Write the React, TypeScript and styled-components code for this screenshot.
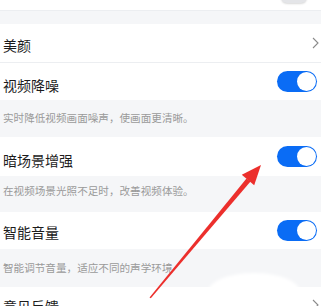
import React from "react";
import styled, { createGlobalStyle } from "styled-components";

const Global = createGlobalStyle`
  html, body { margin: 0; padding: 0; background: #f5f6f8; }
  body { font-family: "Noto Sans CJK SC", "Noto Sans", sans-serif; }
`;

const Page = styled.div`
  position: relative;
  width: 321px;
  height: 306px;
  overflow: hidden;
  background: #f5f6f8;
  display: flex;
  flex-direction: column;
  & > * { flex-shrink: 0; }
`;

const TopStrip = styled.div`
  height: 11px;
  background: #fff;
  border-bottom: 1px solid #eceef1;
  box-sizing: border-box;
  display: flex;
  justify-content: flex-end;
  padding-right: 14px;
`;

const OffToggleTail = styled.div`
  width: 26px;
  height: 12px;
  margin-top: -9px;
  border-radius: 6px;
  background: #e4e5e8;
  box-shadow: 0 1px 2px rgba(0,0,0,0.15);
`;

const Gap = styled.div`
  height: 13px;
`;

const Row = styled.div<{ $h: number; $divider?: boolean; $top?: number }>`
  height: ${(p) => p.$h}px;
  background: #fff;
  display: flex;
  align-items: ${(p) => (p.$top !== undefined ? "flex-start" : "center")};
  padding: ${(p) => p.$top ?? 0}px 4px 0 3px;
  justify-content: space-between;
  box-sizing: border-box;
  border-bottom: ${(p) => (p.$divider ? "1px solid #eceef1" : "none")};
`;

const Title = styled.span<{ $dy?: number }>`
  font-size: 14px;
  color: #1c1c1c;
  line-height: 1;
  transform: translateY(${(p) => p.$dy ?? 1}px);
`;

const Desc = styled.div<{ $h: number; $dy?: number }>`
  height: ${(p) => p.$h}px;
  display: flex;
  align-items: center;
  padding-left: 3px;
  font-size: 10.6px;
  color: #9a9a9a;
  line-height: 1;
  & > span { transform: translateY(${(p) => p.$dy ?? 0}px); }
`;

const Toggle = styled.div`
  width: 40px;
  height: 21px;
  border-radius: 11px;
  background: #0a6cf5;
  display: flex;
  align-items: center;
  justify-content: flex-end;
  padding-right: 1px;
  box-sizing: border-box;
`;

const Knob = styled.div`
  width: 19px;
  height: 19px;
  border-radius: 50%;
  background: #fff;
`;

const Chevron = () => (
  <svg width="7" height="12" viewBox="0 0 7 12" style={{ marginRight: -2 }}>
    <path d="M1 1 L6 6 L1 11" fill="none" stroke="#8a8a8a" strokeWidth="1.1" />
  </svg>
);

const Overlay = styled.svg`
  position: absolute;
  left: 0;
  top: 0;
  pointer-events: none;
`;

export default function App() {
  return (
    <>
      <Global />
      <Page>
        <TopStrip>
          <OffToggleTail />
        </TopStrip>
        <Gap />
        <Row $h={39} $divider>
          <Title $dy={2}>美颜</Title>
          <Chevron />
        </Row>
        <Row $h={37}>
          <Title $dy={3}>视频降噪</Title>
          <Toggle><Knob /></Toggle>
        </Row>
        <Desc $h={37}><span>实时降低视频画面噪声，使画面更清晰。</span></Desc>
        <Row $h={39}>
          <Title $dy={3}>暗场景增强</Title>
          <Toggle><Knob /></Toggle>
        </Row>
        <Desc $h={36} $dy={-3}><span>在视频场景光照不足时，改善视频体验。</span></Desc>
        <Row $h={37}>
          <Title $dy={1}>智能音量</Title>
          <Toggle><Knob /></Toggle>
        </Row>
        <Desc $h={38}><span>智能调节音量，适应不同的声学环境</span></Desc>
        <Row $h={40} $top={12}>
          <Title $dy={0}>意见反馈</Title>
          <Chevron />
        </Row>
        <Overlay width="321" height="306" viewBox="0 0 321 306">
          <defs>
            <filter id="b" x="-20%" y="-50%" width="140%" height="200%">
              <feGaussianBlur stdDeviation="1.5" />
            </filter>
          </defs>
          <ellipse cx="254" cy="292" rx="46" ry="19" fill="#fff" filter="url(#b)" />
          <polygon points="149.5,297.5 150.8,298.3 250.5,181.5 246.5,178.5" fill="#ec2f2c" />
          <polygon points="261,165 241.8,174.8 254.2,185.2" fill="#ec2f2c" />
        </Overlay>
      </Page>
    </>
  );
}
